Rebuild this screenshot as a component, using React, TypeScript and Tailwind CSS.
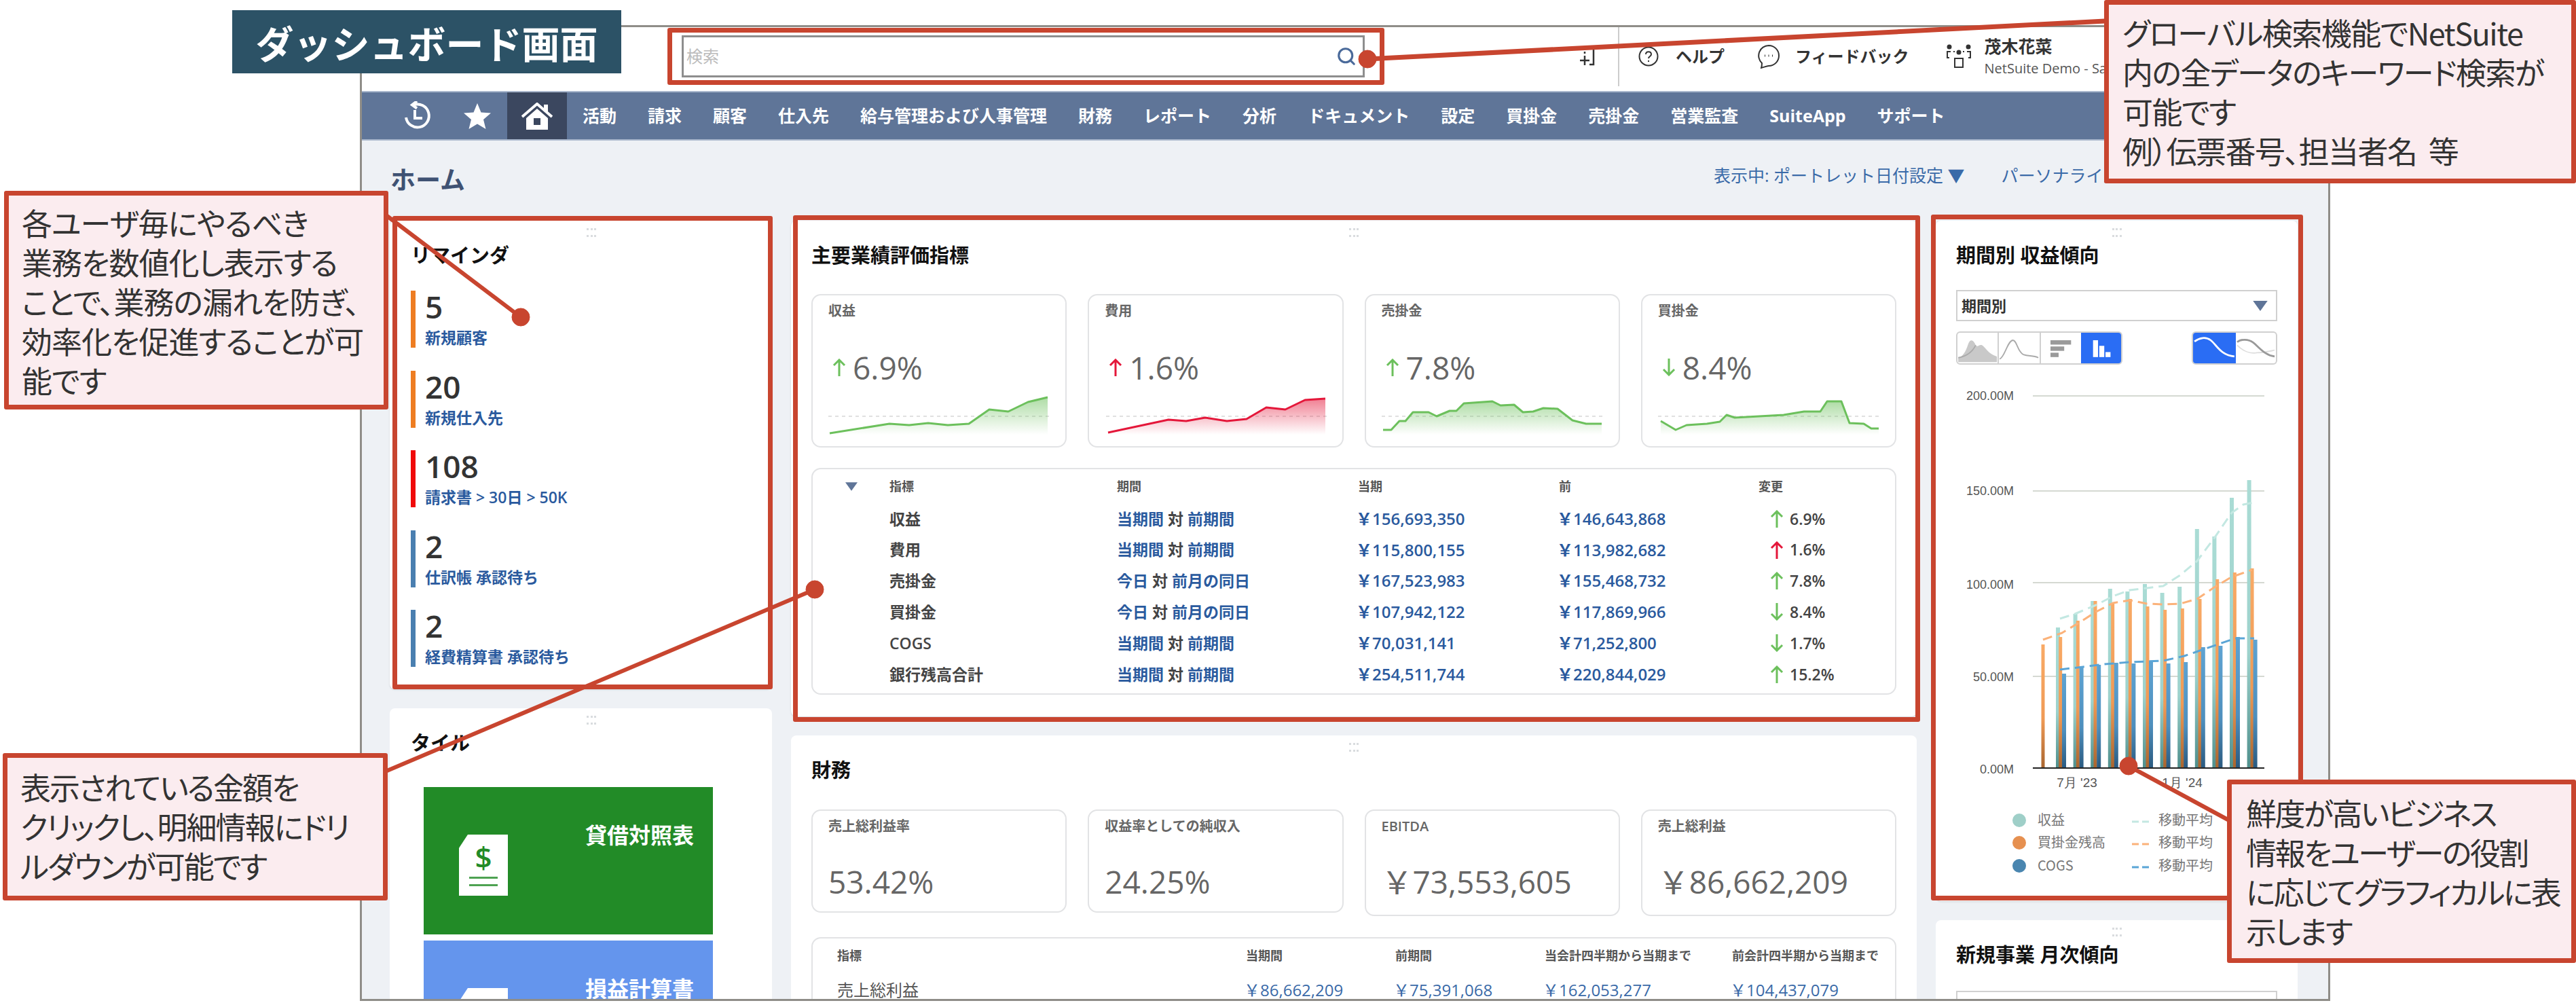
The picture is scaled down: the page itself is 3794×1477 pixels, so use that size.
import React from 'react';
import { Search } from 'lucide-react';

const RED = '#c8452f';

const navItems = ['活動', '請求', '顧客', '仕入先', '給与管理および人事管理', '財務', 'レポート', '分析', 'ドキュメント', '設定', '買掛金', '売掛金', '営業監査', 'SuiteApp', 'サポート'];

const reminders = [
    { value: '5', label: '新規顧客', bar: 'bg-[#ee7d22]' },
    { value: '20', label: '新規仕入先', bar: 'bg-[#ee7d22]' },
    { value: '108', label: '請求書 > 30日 > 50K', bar: 'bg-[#f00a0a]' },
    { value: '2', label: '仕訳帳 承認待ち', bar: 'bg-[#4a7fb0]' },
    { value: '2', label: '経費精算書 承認待ち', bar: 'bg-[#4a7fb0]' },
];

const kpis = [
    { label: '収益', value: '6.9%', dir: 'up', color: '#6cc05c', offset: 'ml-0', pts: '2,56 90,42 119,44 147,41 176,44 207,42 237,21 265,24 294,10 323,3' },
    { label: '費用', value: '1.6%', dir: 'up', color: '#e4173a', offset: 'ml-[2px]', pts: '3,55 92,36 118,38 146,33 178,38 207,35 236,18 264,21 293,7 323,5' },
    { label: '売掛金', value: '7.8%', dir: 'up', color: '#6cc05c', offset: 'ml-0', pts: '2,51 14,51 26,38 35,38 46,25 69,25 81,31 100,23 110,23 121,12 163,9 175,15 195,14 208,25 223,24 238,19 259,20 281,37 301,42 324,42' },
    { label: '買掛金', value: '8.4%', dir: 'down', color: '#6cc05c', offset: 'ml-0', pts: '4,38 26,51 42,44 72,42 91,39 101,29 113,33 185,29 215,24 239,24 249,9 270,9 282,41 303,42 314,49 325,49' },
];

const kpiRows = [
    { name: '収益', a: '当期間', b: '前期間', cur: '￥156,693,350', prev: '￥146,643,868', dir: 'up', color: '#6cc05c', pct: '6.9%' },
    { name: '費用', a: '当期間', b: '前期間', cur: '￥115,800,155', prev: '￥113,982,682', dir: 'up', color: '#e4173a', pct: '1.6%' },
    { name: '売掛金', a: '今日', b: '前月の同日', cur: '￥167,523,983', prev: '￥155,468,732', dir: 'up', color: '#6cc05c', pct: '7.8%' },
    { name: '買掛金', a: '今日', b: '前月の同日', cur: '￥107,942,122', prev: '￥117,869,966', dir: 'down', color: '#6cc05c', pct: '8.4%' },
    { name: 'COGS', a: '当期間', b: '前期間', cur: '￥70,031,141', prev: '￥71,252,800', dir: 'down', color: '#6cc05c', pct: '1.7%' },
    { name: '銀行残高合計', a: '当期間', b: '前期間', cur: '￥254,511,744', prev: '￥220,844,029', dir: 'up', color: '#6cc05c', pct: '15.2%' },
];

const finance = [
    { label: '売上総利益率', value: '53.42%', h: 'h-[152px]' },
    { label: '収益率としての純収入', value: '24.25%', h: 'h-[152px]' },
    { label: 'EBITDA', value: '￥73,553,605', h: 'h-[157px]' },
    { label: '売上総利益', value: '￥86,662,209', h: 'h-[157px]' },
];

// bar tops are in page pixels, the chart viewBox uses the same coordinates
const baseY = 1131;
const tealTops = [924, 904, 885, 867, 871, 860, 873, 864, 779, 790, 733, 707];
const orangeTops = [949, 938, 914, 885, 888, 882, 893, 898, 896, 882, 853, 843, 837];
const blueTops = [992, 982, 979, 976, 977, 973, 977, 975, 953, 951, 938, 942];

const Arrow = ({ dir, color, className }: { dir: string; color: string; className?: string }) => (
    <svg viewBox="0 0 20 26" className={className} fill="none" stroke={color} strokeWidth="3">
        {dir === 'up' ? <path d="M10 26V2M2 10l8-8 8 8" /> : <path d="M10 0v24M2 16l8 8 8-8" />}
    </svg>
);

const DragDots = () => (
    <div className="mx-auto grid w-[14px] grid-cols-3 gap-x-[3px] gap-y-[7px] pt-[11px]">
        {[0, 1, 2, 3, 4, 5].map((i) => (
            <span key={i} className="h-[3px] w-[3px] bg-[#d9dcdf]" />
        ))}
    </div>
);

const CardHead = ({ title }: { title: string }) => (
    <div>
        <DragDots />
        <h2 className="mt-[11px] text-[29px] leading-[32px] font-bold text-[#111]">{title}</h2>
    </div>
);

const Spark = ({ pts, color, id, offset }: { pts: string; color: string; id: string; offset: string }) => {
    const first = pts.split(' ')[0].split(',')[0];
    const last = pts.split(' ').slice(-1)[0].split(',')[0];
    return (
        <svg viewBox="0 0 330 64" className={`mt-[11px] block h-[64px] w-[330px] ${offset}`} fill="none">
            <defs>
                <linearGradient id={id} x1="0" y1="0" x2="0" y2="1">
                    <stop offset="0" stopColor={color} stopOpacity="0.55" />
                    <stop offset="1" stopColor={color} stopOpacity="0" />
                </linearGradient>
            </defs>
            <path d="M0 31H328" stroke="#d6d6d6" strokeWidth="1.5" strokeDasharray="5 5" />
            <polygon points={`${first},58 ${pts} ${last},58`} fill={`url(#${id})`} />
            <polyline points={pts} stroke={color} strokeWidth="3" strokeLinejoin="round" />
        </svg>
    );
};

const HistoryIcon = () => (
    <svg viewBox="0 0 44 44" className="h-[44px] w-[44px]" fill="none" stroke="#fff" strokeWidth="4">
        <path d="M16 5.5A17 17 0 1 1 5 24" />
        <path d="M21 0l-7 5.5 7 5" />
        <path d="M18 13v12h11" />
    </svg>
);

const HomeIcon = () => (
    <svg viewBox="0 0 46 40" className="h-[40px] w-[46px]">
        <path d="M1 21 23 2l22 19" fill="none" stroke="#fff" strokeWidth="4" />
        <path d="M33 3h6v12l-6-5z" fill="#fff" />
        <path fillRule="evenodd" d="M7 23 23 9l16 14v17H7zM18 23v10h10V23z" fill="#fff" />
    </svg>
);

const Triangle = ({ className }: { className: string }) => (
    <svg viewBox="0 0 20 14" className={className}>
        <path d="M0 0h20L10 14z" fill="#5f7598" />
    </svg>
);

const LedgerIcon = ({ color }: { color: string }) => (
    <div className="mt-[70px] ml-[52px] flex h-[90px] w-[72px] flex-col items-center bg-white pt-[8px] [clip-path:polygon(18%_0,100%_0,100%_100%,0_100%,0_22%)]">
        <span className="text-[44px] leading-[50px] font-semibold" style={{ color }}>$</span>
        <span className="mt-[4px] h-[3px] w-[42px] opacity-80" style={{ backgroundColor: color }} />
        <span className="mt-[8px] h-[3px] w-[42px] opacity-80" style={{ backgroundColor: color }} />
    </div>
);

const Tile = ({ title, bg, color, h }: { title: string; bg: string; color: string; h: string }) => (
    <div className={`ml-[50px] flex w-[426px] justify-between overflow-hidden ${bg} ${h}`}>
        <LedgerIcon color={color} />
        <div className="mt-[53px] mr-[28px] text-[32px] leading-[36px] font-bold text-white">{title}</div>
    </div>
);

const Toggles = () => (
    <div className="mt-[15px] flex justify-between">
        <div className="flex h-[49px] w-[245px] overflow-hidden rounded-[6px] border-2 border-[#d0d0d0]">
            <svg viewBox="0 0 62 49" className="h-full w-[62px] border-r-2 border-[#d0d0d0]">
                <path d="M0 47V40C8 38 12 30 16 18 19 10 24 10 28 20 31 24 34 18 38 20 44 24 48 34 62 38V47z" fill="#c9c9c9" />
                <path d="M0 40C12 38 22 32 28 20" fill="none" stroke="#aaa" strokeWidth="2" />
            </svg>
            <svg viewBox="0 0 62 49" className="h-full w-[62px] border-r-2 border-[#d0d0d0]" fill="none">
                <path d="M0 42C8 40 12 14 21 12 28 12 28 30 38 35 46 38 54 36 62 40" stroke="#aaa" strokeWidth="2" />
            </svg>
            <svg viewBox="0 0 60 49" className="h-full w-[60px]" fill="#9a9a9a">
                <rect x="13" y="12" width="33" height="7" />
                <rect x="13" y="22" width="22" height="7" />
                <rect x="13" y="32" width="13" height="7" />
            </svg>
            <svg viewBox="0 0 60 49" className="h-full w-[60px] bg-[#2a6df4]" fill="#fff">
                <rect x="17" y="12" width="8" height="27" />
                <rect x="27" y="21" width="8" height="18" />
                <rect x="37" y="31" width="8" height="8" />
            </svg>
        </div>
        <div className="flex h-[49px] w-[126px] overflow-hidden rounded-[6px] border-2 border-[#d0d0d0]">
            <svg viewBox="0 0 64 49" className="h-full w-[64px] bg-[#2a6df4]" fill="none">
                <path d="M0 14C8 8 18 6 26 12 36 20 42 36 64 38" stroke="#fff" strokeWidth="3" />
            </svg>
            <svg viewBox="0 0 60 49" className="h-full w-[60px]" fill="none">
                <path d="M0 20C10 30 22 34 32 32 42 32 50 30 60 28" stroke="#ddd" strokeWidth="2" />
                <path d="M0 15C6 10 18 10 26 16 36 24 44 36 60 38" stroke="#999" strokeWidth="3" />
            </svg>
        </div>
    </div>
);

const TrendChart = () => (
    <svg viewBox="2851 560 533 760" className="mt-[23px] block h-[760px] w-[533px] [font-family:'Liberation_Sans',sans-serif]">
        <defs>
            <linearGradient id="barTeal" x1="0" y1="0" x2="0" y2="1">
                <stop offset="0" stopColor="#aadcd5" />
                <stop offset="0.6" stopColor="#9ed2cc" />
                <stop offset="1" stopColor="#4f8f8c" />
            </linearGradient>
            <linearGradient id="barOrange" x1="0" y1="0" x2="0" y2="1">
                <stop offset="0" stopColor="#f9aa66" />
                <stop offset="0.6" stopColor="#f09a55" />
                <stop offset="1" stopColor="#a9652f" />
            </linearGradient>
            <linearGradient id="barBlue" x1="0" y1="0" x2="0" y2="1">
                <stop offset="0" stopColor="#5ea3d2" />
                <stop offset="0.6" stopColor="#4e8fbd" />
                <stop offset="1" stopColor="#2a5a80" />
            </linearGradient>
        </defs>
        {[583, 723, 858, 996].map((y) => (
            <line key={y} x1="2994" x2="3335" y1={y} y2={y} stroke="#d5d9d2" strokeWidth="2" />
        ))}
        {[['200.00M', 589], ['150.00M', 729], ['100.00M', 867], ['50.00M', 1003], ['0.00M', 1139]].map(([t, y]) => (
            <text key={t} x="2966" y={y} textAnchor="end" fontSize="18" fill="#555">{t}</text>
        ))}
        {tealTops.map((top, i) => (
            <rect key={i} x={3028 + i * 25.6} y={top} width="6" height={baseY - top} fill="url(#barTeal)" />
        ))}
        {orangeTops.map((top, i) => (
            <rect key={i} x={3006.5 + i * 25.67} y={top} width="5" height={baseY - top} fill="url(#barOrange)" />
        ))}
        {blueTops.map((top, i) => (
            <rect key={i} x={3037 + i * 25.6} y={top} width="6" height={baseY - top} fill="url(#barBlue)" />
        ))}
        <g fill="none" strokeWidth="3" strokeDasharray="14 8" strokeLinejoin="round">
            <polyline stroke="#c3e8e2" points="3034,911 3056,904 3087,891 3112,878 3137,869 3162,866 3186,863 3211,847 3236,826 3260,794 3287,755 3304,743 3319,740" />
            <polyline stroke="#fbb27a" points="3009,942 3037,932 3062,917 3087,901 3112,888 3137,884 3162,889 3186,890 3211,889 3236,882 3261,865 3286,850 3317,839" />
            <polyline stroke="#5aa5d6" points="3034,986 3068,982 3100,978 3137,975 3186,973 3217,966 3249,955 3292,940 3320,940" />
        </g>
        <line x1="2994" x2="3335" y1="1131" y2="1131" stroke="#222" strokeWidth="2" />
        <text x="3059" y="1159" textAnchor="middle" fontSize="19" fill="#555">7月 '23</text>
        <text x="3214" y="1159" textAnchor="middle" fontSize="19" fill="#555">1月 '24</text>
        {[
            { y: 1208, fill: '#9fcfc8', dash: '#c3e8e2', name: '収益' },
            { y: 1241, fill: '#e69050', dash: '#fbb27a', name: '買掛金残高' },
            { y: 1275, fill: '#4a86b0', dash: '#5aa5d6', name: 'COGS' },
        ].map((l) => (
            <g key={l.name}>
                <circle cx="2974" cy={l.y} r="10" fill={l.fill} />
                <text x="3001" y={l.y + 7} fontSize="20" fill="#777" className="[font-family:'Noto_Sans_CJK_JP',sans-serif]">{l.name}</text>
                <line x1="3140" x2="3165" y1={l.y + 2} y2={l.y + 2} stroke={l.dash} strokeWidth="3" strokeDasharray="10 5" />
                <text x="3179" y={l.y + 7} fontSize="20" fill="#777" className="[font-family:'Noto_Sans_CJK_JP',sans-serif]">移動平均</text>
            </g>
        ))}
    </svg>
);

const Dashboard = () => (
    <div className="ml-[530px] h-[1437px] w-[2902px] overflow-hidden border-[3px] border-[#8f8d88] bg-[#eef1f5] [font-family:'Open_Sans','Noto_Sans_CJK_JP',sans-serif]">
        {/* top bar */}
        <header className="flex h-[94px] items-center bg-white pb-[8px]">
            <div className="ml-[471px] flex h-[62px] w-[1006px] shrink-0 items-center justify-between border-[3px] border-[#8e8e8e] px-[4px] pr-[9px] text-[24px] text-[#bbb]">
                <span>検索</span>
                <Search className="h-[30px] w-[30px] text-[#4a6a9a]" strokeWidth={2.5} />
            </div>
            <svg viewBox="0 0 34 34" className="ml-[311px] h-[34px] w-[34px]" fill="none" stroke="#333" strokeWidth="2.5">
                <path d="M20 3h6v26h-6M13 3v3M13 10v3M13 16v14M6 23h14" />
            </svg>
            <div className="mx-[28px] h-[88px] w-[2px] bg-[#ccc]" />
            <div className="flex items-center text-[24px] font-semibold text-[#333]">
                <svg viewBox="0 0 30 30" className="h-[30px] w-[30px]" fill="none" stroke="#333" strokeWidth="2">
                    <circle cx="15" cy="15" r="13.5" />
                    <path d="M11 12c0-5 8-5 8 0 0 3-4 3-4 6M15 21v2" />
                </svg>
                <span className="ml-[25px]">ヘルプ</span>
                <svg viewBox="0 0 34 36" className="ml-[48px] h-[36px] w-[34px]" fill="none" stroke="#333" strokeWidth="2">
                    <path d="M17 2a15 15 0 0 1 0 30c-3 0-7 2-11 3 1-3 1-5 1-7A15 15 0 0 1 17 2z" />
                    <path d="M11 17h1M16.5 17h1M22 17h1" strokeWidth="3" />
                </svg>
                <span className="ml-[22px]">フィードバック</span>
                <svg viewBox="0 0 36 36" className="ml-[55px] h-[36px] w-[36px]" fill="none" stroke="#333" strokeWidth="2">
                    <rect x="12" y="21" width="12" height="13" />
                    <circle cx="4" cy="4" r="2.5" fill="#333" />
                    <circle cx="18" cy="12" r="2.5" fill="#333" />
                    <circle cx="32" cy="4" r="2.5" fill="#333" />
                    <path d="M6 11H1v9h3M30 11h5v9h-3M10 11h2M24 11h2" />
                </svg>
                <div className="ml-[20px] flex flex-col">
                    <span className="text-[25px] leading-[36px] font-bold">茂木花菜</span>
                    <span className="text-[20px] leading-[30px] font-normal whitespace-nowrap text-[#555]">NetSuite Demo - Sales Manager</span>
                </div>
            </div>
        </header>
        {/* nav */}
        <nav className="flex h-[73px] items-center gap-[44px] overflow-hidden border-y-2 border-[#a9b7cc] bg-[#5f7598] text-[25px] font-bold whitespace-nowrap text-white">
            <div className="flex h-full shrink-0 items-center">
                <div className="ml-[60px]"><HistoryIcon /></div>
                <svg viewBox="0 0 40 38" className="ml-[46px] h-[38px] w-[40px]" fill="#fff">
                    <path d="M20 0l5.5 13.5L40 14.5 29 24l3.500 14L20 30.500 7.500 38 11 24 0 14.500 14.500 13.500z" />
                </svg>
                <div className="ml-[24px] flex h-full w-[88px] items-center justify-center bg-[#3b475f]"><HomeIcon /></div>
            </div>
            <div className="-ml-[21px] flex gap-[46px]">
                {navItems.map((item) => (
                    <span key={item}>{item}</span>
                ))}
            </div>
        </nav>
        {/* page title */}
        <div className="flex h-[118px] items-start pt-[32px] pl-[42px]">
            <h1 className="w-[115px] shrink-0 text-[37px] leading-[52px] font-bold whitespace-nowrap text-[#3f5273]">ホーム</h1>
            <div className="ml-[1834px] flex gap-[54px] pt-[1px] text-[25px] leading-[36px] whitespace-nowrap text-[#3a6aa8]">
                <span>表示中: ポートレット日付設定 ▼</span>
                <span>パーソナライズ</span>
            </div>
        </div>
        {/* portlets */}
        <div className="flex items-start gap-[28px] pl-[41px]">
            <div className="flex w-[563px] shrink-0 flex-col gap-[28px]">
                <section className="h-[690px] rounded-lg bg-white pl-[31px] shadow-sm">
                    <CardHead title="リマインダ" />
                    <div className="mt-[36px] flex flex-col gap-[33.500px]">
                        {reminders.map((r, i) => (
                            <div key={i} className="flex h-[84px]">
                                <span className={`h-full w-[7px] ${r.bar}`} />
                                <div className="ml-[14px] flex flex-col">
                                    <span className="text-[46px] leading-[46px] font-semibold text-[#333]">{r.value}</span>
                                    <span className="mt-[11px] text-[23px] leading-[24px] font-semibold text-[#2a5a9e]">{r.label}</span>
                                </div>
                            </div>
                        ))}
                    </div>
                </section>
                <section className="h-[500px] rounded-lg bg-white">
                    <div className="pl-[31px]"><CardHead title="タイル" /></div>
                    <div className="mt-[49px] flex flex-col gap-[9px]">
                        <Tile title="貸借対照表" bg="bg-[#228b27]" color="#228b27" h="h-[217px]" />
                        <Tile title="損益計算書" bg="bg-[#6495ed]" color="#6495ed" h="h-[217px]" />
                    </div>
                </section>
            </div>
            <div className="flex w-[1658px] shrink-0 flex-col gap-[28px]">
                <section className="h-[730px] rounded-lg bg-white px-[30px] shadow-sm">
                    <CardHead title="主要業績評価指標" />
                    <div className="mt-[41px] grid grid-cols-4 gap-[31px]">
                        {kpis.map((k, i) => (
                            <div key={k.label} className="h-[226px] rounded-[14px] border-2 border-[#e2e3e5] pt-[10px] pl-[23px]">
                                <div className="text-[20px] leading-[26px] font-semibold text-[#666]">{k.label}</div>
                                <div className="mt-[40px] flex h-[60px] items-center">
                                    <Arrow dir={k.dir} color={k.color} className="ml-[6px] h-[26px] w-[20px]" />
                                    <span className="ml-[10px] text-[46px] leading-[60px] text-[#666]">{k.value}</span>
                                </div>
                                <Spark pts={k.pts} color={k.color} id={`spark${i}`} offset={k.offset} />
                            </div>
                        ))}
                    </div>
                    <div className="mt-[30px] h-[334px] rounded-[14px] border-2 border-[#e2e3e5]">
                        <div className="grid h-[50px] grid-cols-[113px_335px_355px_296px_294px_1fr] items-center text-[18px] font-semibold text-[#555]">
                            <span className="pl-[48px]"><Triangle className="h-[13px] w-[18px]" /></span>
                            <span>指標</span>
                            <span>期間</span>
                            <span>当期</span>
                            <span>前</span>
                            <span>変更</span>
                        </div>
                        {kpiRows.map((r) => (
                            <div key={r.name} className="grid h-[45.800px] grid-cols-[113px_335px_355px_296px_294px_1fr] items-center text-[23px] font-semibold">
                                <span />
                                <span className="text-[#444]">{r.name}</span>
                                <span className="text-[#2a5a9e]">{r.a} <span className="text-[#444]">対</span> {r.b}</span>
                                <span className="-ml-[3px] text-[24px] text-[#2a5a9e]">{r.cur}</span>
                                <span className="-ml-[3px] text-[24px] text-[#2a5a9e]">{r.prev}</span>
                                <span className="flex items-center pl-[17px] text-[#444]">
                                    <Arrow dir={r.dir} color={r.color} className="h-[26px] w-[20px]" />
                                    <span className="ml-[9px]">{r.pct}</span>
                                </span>
                            </div>
                        ))}
                    </div>
                </section>
                <section className="h-[500px] rounded-lg bg-white px-[30px]">
                    <CardHead title="財務" />
                    <div className="mt-[42px] grid grid-cols-4 items-start gap-[31px]">
                        {finance.map((f) => (
                            <div key={f.label} className={`rounded-[14px] border-2 border-[#e2e3e5] pt-[10px] pl-[23px] ${f.h}`}>
                                <div className="text-[20px] leading-[26px] font-semibold text-[#666]">{f.label}</div>
                                <div className="mt-[38px] text-[46px] leading-[60px] text-[#666]">{f.value}</div>
                            </div>
                        ))}
                    </div>
                    <div className="mt-[31px] h-[200px] rounded-[14px] border-2 border-[#e2e3e5] pl-[36px]">
                        <div className="grid h-[50px] grid-cols-[602px_220px_220px_276px_1fr] items-center text-[18px] font-semibold text-[#555]">
                            <span>指標</span>
                            <span>当期間</span>
                            <span>前期間</span>
                            <span>当会計四半期から当期まで</span>
                            <span>前会計四半期から当期まで</span>
                        </div>
                        <div className="mt-[3px] grid h-[46px] grid-cols-[602px_220px_220px_276px_1fr] items-center text-[24px] text-[#3a6aa8]">
                            <span className="text-[#555]">売上総利益</span>
                            <span className="-ml-[3px]">￥86,662,209</span>
                            <span className="-ml-[3px]">￥75,391,068</span>
                            <span className="-ml-[3px]">￥162,053,277</span>
                            <span className="-ml-[3px]">￥104,437,079</span>
                        </div>
                    </div>
                </section>
            </div>
            <div className="flex w-[533px] shrink-0 flex-col gap-[28px]">
                <section className="h-[1002px] rounded-lg bg-white shadow-sm">
                    <div className="px-[30px]">
                        <CardHead title="期間別 収益傾向" />
                        <div className="mt-[35px] flex h-[46px] items-center justify-between border-2 border-[#d0d0d0] px-[6px] pr-[12px] text-[22px] font-semibold text-[#333]">
                            <span>期間別</span>
                            <Triangle className="h-[15px] w-[22px]" />
                        </div>
                        <Toggles />
                    </div>
                    <TrendChart />
                </section>
                <section className="h-[300px] rounded-lg bg-white px-[30px]">
                    <CardHead title="新規事業 月次傾向" />
                    <div className="mt-[37px] h-[46px] border-2 border-[#d0d0d0]" />
                </section>
            </div>
        </div>
    </div>
);

const RedBox = ({ className }: { className: string }) => (
    <div className={`absolute rounded-[3px] border-[7px] border-[#c8452f] ${className}`} />
);

const Callout = ({ className, children }: { className: string; children: React.ReactNode }) => (
    <div className={`absolute rounded-[3px] border-[7px] border-[#c8452f] bg-[#fbecef] text-[45px] leading-[58px] whitespace-nowrap text-[#333] [font-family:'Noto_Sans_CJK_JP',sans-serif] [font-feature-settings:'palt'] ${className}`}>
        {children}
    </div>
);

export default function App() {
    return (
        <div className="relative h-[1477px] w-[3794px] overflow-hidden bg-white pt-[37px]">
            <Dashboard />

            {/* annotations over the screenshot */}
            <div className="absolute top-[15px] left-[342px] flex h-[93px] w-[573px] items-center justify-center bg-[#2c5266] text-[56px] font-bold text-white [font-family:'Noto_Sans_CJK_JP',sans-serif]">
                ダッシュボード画面
            </div>
            <RedBox className="top-[41px] left-[983px] h-[84px] w-[1056px]" />
            <RedBox className="top-[318px] left-[578px] h-[697px] w-[560px]" />
            <RedBox className="top-[317px] left-[1168px] h-[746px] w-[1660px]" />
            <RedBox className="top-[316px] left-[2844px] h-[1010px] w-[548px]" />

            <svg viewBox="0 0 3794 1477" className="absolute top-0 left-0 h-[1477px] w-[3794px]" fill={RED} stroke={RED}>
                <line x1="2014" y1="87" x2="3100" y2="31" strokeWidth="7" />
                <line x1="570" y1="318" x2="767" y2="467" strokeWidth="6" />
                <line x1="570" y1="1135" x2="1200" y2="868" strokeWidth="6" />
                <line x1="3135" y1="1128" x2="3283" y2="1208" strokeWidth="6" />
                <circle cx="2014" cy="87" r="13" />
                <circle cx="767" cy="467" r="13" />
                <circle cx="1200" cy="868" r="13" />
                <circle cx="3135" cy="1128" r="13" />
            </svg>

            <Callout className="top-0 left-[3099px] h-[270px] w-[695px] pt-[12px] pl-[20px] tracking-[-1.5px]">
                グローバル検索機能でNetSuite<br />
                内の全データのキーワード検索が<br />
                可能です<br />
                例）伝票番号、担当者名&nbsp;&nbsp;等
            </Callout>
            <Callout className="top-[281px] left-[6px] h-[322px] w-[566px] pt-[11px] pl-[19px] tracking-[-1px]">
                各ユーザ毎にやるべき<br />
                業務を数値化し表示する<br />
                ことで、業務の漏れを防ぎ、<br />
                効率化を促進することが可<br />
                能です
            </Callout>
            <Callout className="top-[1109px] left-[4px] h-[217px] w-[567px] pt-[14px] pl-[19px] tracking-[-2px]">
                表示されている金額を<br />
                クリックし、明細情報にドリ<br />
                ルダウンが可能です
            </Callout>
            <Callout className="top-[1148px] left-[3280px] h-[270px] w-[514px] pt-[13px] pl-[21px] tracking-[-2.5px]">
                鮮度が高いビジネス<br />
                情報をユーザーの役割<br />
                に応じてグラフィカルに表<br />
                示します
            </Callout>
        </div>
    );
}
